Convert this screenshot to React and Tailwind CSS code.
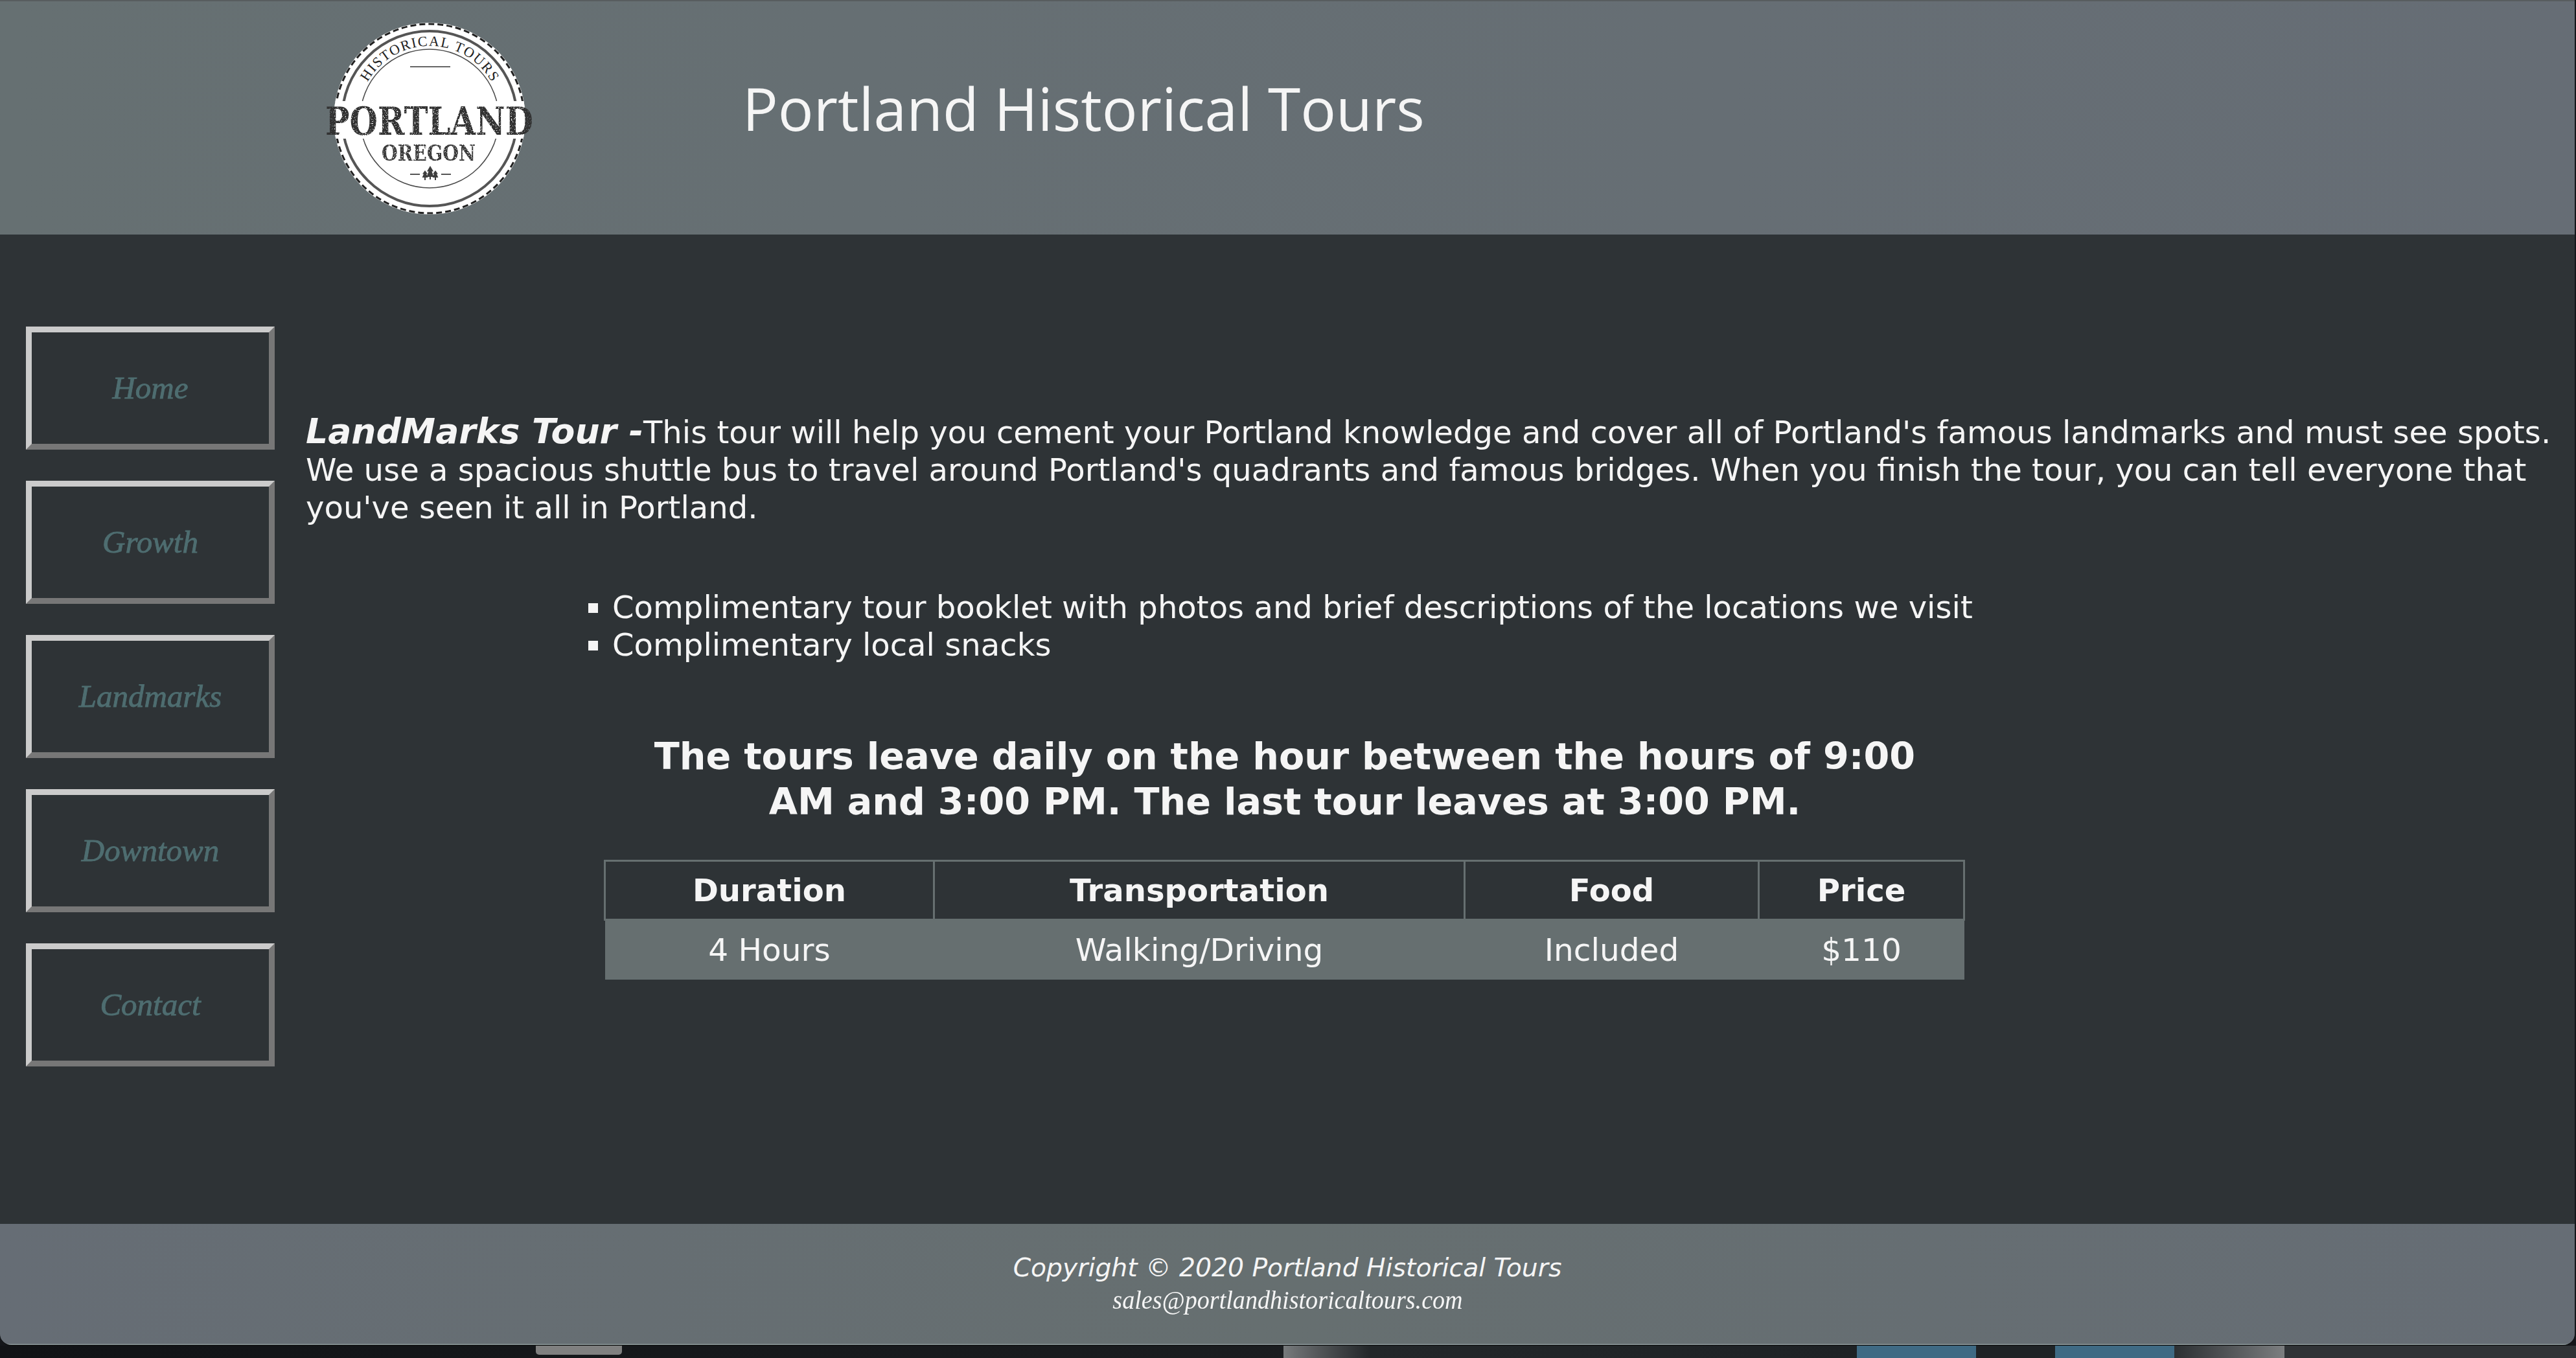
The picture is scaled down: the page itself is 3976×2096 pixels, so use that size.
import React from 'react';

const NAV = ['Home', 'Growth', 'Landmarks', 'Downtown', 'Contact'];

function Tree({ x, top, h, w }) {
  return (
    <g fill="#3d3d3d">
      <polygon points={`${x},${top} ${x + w},${top + h * 0.5} ${x + w * 0.5},${top + h * 0.5} ${x + w * 1.1},${top + h} ${x - w * 1.1},${top + h} ${x - w * 0.5},${top + h * 0.5} ${x - w},${top + h * 0.5}`} />
      <rect x={x - 1} y={top + h} width="2" height="4" />
    </g>
  );
}

function Logo() {
  return (
    <svg viewBox="0 0 360 362" className="h-[362px] w-[360px] shrink-0">
      <defs>
        <clipPath id="disc">
          <circle cx="183" cy="182" r="148" />
        </clipPath>
        <path id="arc" d="M 83 134 A 110 110 0 0 1 283 134" />
        <filter id="worn" x="0" y="0" width="100%" height="100%">
          <feTurbulence type="fractalNoise" baseFrequency="0.55" numOctaves="2" seed="4" />
          <feColorMatrix values="0 0 0 0 0  0 0 0 0 0  0 0 0 0 0  0 0 0 -8 5.8" />
          <feComposite in="SourceGraphic" operator="in" />
        </filter>
      </defs>
      <circle cx="183" cy="182" r="148" fill="#fff" />
      <circle cx="183" cy="182" r="146" fill="none" stroke="#222" strokeWidth="3" strokeDasharray="9 5" />
      <circle cx="183" cy="182" r="135" fill="none" stroke="#555" strokeWidth="4" />
      <circle cx="183" cy="182" r="107" fill="none" stroke="#4a4a4a" strokeWidth="1.5" />
      <g clipPath="url(#disc)">
        <rect x="30" y="155" width="306" height="58" fill="#fff" />
      </g>
      <text fontFamily="'Liberation Serif', serif" fontSize="22" fill="#222" textAnchor="middle">
        <textPath href="#arc" startOffset="50%" textLength="232" lengthAdjust="spacing">HISTORICAL TOURS</textPath>
      </text>
      <rect x="153" y="101" width="62" height="2" fill="#666" />
      <g filter="url(#worn)">
        <text transform="translate(22 207) scale(1 1.2)" fontFamily="'DejaVu Serif', serif" fontWeight="700" fontSize="50" fill="#333" textLength="321" lengthAdjust="spacingAndGlyphs">PORTLAND</text>
        <text x="109" y="247" fontFamily="'DejaVu Serif', serif" fontWeight="700" fontSize="33" fill="#3a3a3a" textLength="145" lengthAdjust="spacingAndGlyphs">OREGON</text>
      </g>
      <rect x="153" y="267" width="15" height="2" fill="#555" />
      <rect x="201" y="267" width="15" height="2" fill="#555" />
      <Tree x={184} top={255} h={17} w={5} />
      <Tree x={176} top={262} h={11} w={4} />
      <Tree x={192} top={262} h={11} w={4} />
    </svg>
  );
}

function NavButton({ label }) {
  return (
    <a className="flex h-[190px] w-[384px] items-center justify-center border-[9px] border-t-[#cbcbcb] border-r-[#777777] border-b-[#777777] border-l-[#cbcbcb] font-['Liberation_Serif',serif] text-[49px] text-[#4e6d70] italic [-webkit-text-stroke:0.9px_#4e6d70]">
      {label}
    </a>
  );
}

export default function App() {
  return (
    <div className="flex h-[2096px] w-[3976px] flex-col overflow-hidden bg-[#14161a] font-['DejaVu_Sans',sans-serif] text-[#f5f5f5]">
      {/* Browser window */}
      <div className="flex h-[2077px] w-[3974px] shrink-0 flex-col overflow-hidden rounded-b-[18px] border-b border-b-black bg-[#2e3336]">
        <header className="flex h-[362px] shrink-0 items-center border-t-2 border-t-[#585d5f] bg-linear-to-r from-[#667072] to-[#666d75] pl-[480px]">
          <Logo />
          <h1 className="mb-[30px] ml-[306px] font-['Open_Sans',sans-serif] text-[91.2px] font-normal whitespace-nowrap text-[#f5f5f5]">
            Portland Historical Tours
          </h1>
        </header>

        <main className="flex min-h-0 flex-1">
          <nav className="flex w-[472px] shrink-0 flex-col gap-[48px] pt-[142px] pl-[40px]">
            {NAV.map((n) => (
              <NavButton key={n} label={n} />
            ))}
          </nav>
          <div className="flex-1 pt-[275px] text-[48.1px] leading-[58px]">
            <p>
              <b className="text-[53.6px] italic">LandMarks Tour -</b>
              This tour will help you cement your Portland knowledge and cover all of Portland's famous landmarks and must see spots. We use a spacious shuttle bus to travel around Portland's quadrants and famous bridges. When you finish the tour, you can tell everyone that you've seen it all in Portland.
            </p>
            <ul className="mt-[96px] ml-[473px] list-[square]">
              <li>Complimentary tour booklet with photos and brief descriptions of the locations we visit</li>
              <li>Complimentary local snacks</li>
            </ul>
            <h2 className="mt-[108px] ml-[486px] w-[2050px] text-center text-[57.2px] leading-[70px] font-bold">
              The tours leave daily on the hour between the hours of 9:00 AM and 3:00 PM. The last tour leaves at 3:00 PM.
            </h2>
            <table className="mt-[55px] ml-[460px] w-[2101px] table-fixed border-collapse text-[48.6px]">
              <thead>
                <tr className="h-[91px] text-[48.1px]">
                  <th className="w-[508px] border-[3px] border-[#666f70]">Duration</th>
                  <th className="w-[819px] border-[3px] border-[#666f70]">Transportation</th>
                  <th className="w-[454px] border-[3px] border-[#666f70]">Food</th>
                  <th className="border-[3px] border-[#666f70]">Price</th>
                </tr>
              </thead>
              <tbody>
                <tr className="h-[92px] bg-[#666f70] text-center">
                  <td>4 Hours</td>
                  <td>Walking/Driving</td>
                  <td>Included</td>
                  <td>$110</td>
                </tr>
              </tbody>
            </table>
          </div>
        </main>

        <footer className="flex h-[187px] shrink-0 flex-col items-center border-b-2 border-b-[#7f8a8c] bg-linear-to-r from-[#666d75] via-[#666f70] to-[#666d75] pt-[44px]">
          <p className="text-[39.3px] leading-[48px] italic">Copyright © 2020 Portland Historical Tours</p>
          <p className="mt-[2px] scale-x-[0.93] font-['Liberation_Serif',serif] text-[41px] leading-[46px] italic">sales@portlandhistoricaltours.com</p>
        </footer>
      </div>

      {/* Desktop peeking out under the window */}
      <div className="flex min-h-0 flex-1 bg-linear-to-r from-[#111316] to-[#24272a]">
        <div className="w-[827px]" />
        <div className="h-[14px] w-[133px] rounded-b-[5px] bg-[#808080]" />
        <div className="w-[1021px]" />
        <div className="w-[885px] bg-linear-to-r from-[#777a7c] from-0% via-[#23272a] via-15% to-[#1e2225] to-100%" />
        <div className="w-[184px] bg-[#3f6a84]" />
        <div className="w-[122px] bg-[#1f2326]" />
        <div className="w-[184px] bg-[#3f6a84]" />
        <div className="w-[170px] bg-linear-to-r from-[#2c3033] to-[#7c7e80]" />
        <div className="flex-1 bg-[#303336]" />
      </div>
    </div>
  );
}
